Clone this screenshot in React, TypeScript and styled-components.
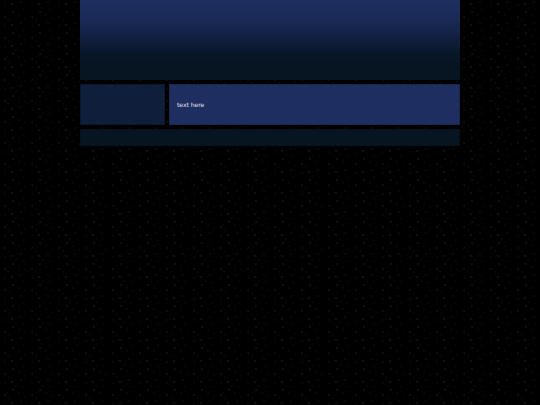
import React from "react";
import styled, { createGlobalStyle } from "styled-components";

const GlobalStyle = createGlobalStyle`
  body {
    margin: 0;
    min-height: 100vh;
    background-color: #000001;
    background-image:
      radial-gradient(circle at 13px 12px, #303238 0, transparent 1px),
      radial-gradient(circle at 5px 17px, #2b2e34 0, transparent 1px),
      radial-gradient(circle at 19px 15px, #1a1c24 0, transparent 1px),
      radial-gradient(ellipse 2px 1px at 12px 4px, #212427 0, transparent 100%),
      radial-gradient(circle at 5px 5px, #1a1d22 0, transparent 1px),
      radial-gradient(circle at 23px 9px, #12122c 0, transparent 1px),
      radial-gradient(ellipse 2px 1px at 21px 2px, #12151d 0, transparent 100%),
      radial-gradient(circle at 9px 20px, #11141f 0, transparent 1px),
      radial-gradient(circle at 16px 8px, #0e0e20 0, transparent 1px),
      radial-gradient(circle at 25px 18px, #101218 0, transparent 1px);
    background-size: 27px 21px;
    font-family: "DejaVu Sans", sans-serif;
    font-size: 6px;
    line-height: 8px;
    color: #e0e2ee;
  }
`;

const Page = styled.div`
  display: flex;
  flex-direction: column;
  gap: 4px;
  max-width: 380px;
  margin: 0 auto;
`;

const Header = styled.header`
  box-sizing: border-box;
  height: 80px;
  background: linear-gradient(#1e2e60 0, #1a2a57 20px, #101e3d 40px, #081628 54px, #071523 64px, #071523 100%);
`;

const Columns = styled.div`
  display: grid;
  grid-template-columns: 85px minmax(0, 1fr);
  gap: 4px;
`;

const Sidebar = styled.aside`
  background: #0f1e3b;
  border: 1px solid #0c172c;
`;

const Content = styled.main`
  padding: 16px 7px 15px;
  background: #1e2e60;
  border: 1px solid #182650;
`;

const Text = styled.p`
  margin: 0;
`;

const Footer = styled.footer`
  box-sizing: border-box;
  height: 17px;
  background: #071523;
  border: 1px solid #06111c;
`;

export default function App() {
  return (
    <>
      <GlobalStyle />
      <Page>
        <Header />
        <Columns>
          <Sidebar />
          <Content>
            <Text>text here</Text>
          </Content>
        </Columns>
        <Footer />
      </Page>
    </>
  );
}
